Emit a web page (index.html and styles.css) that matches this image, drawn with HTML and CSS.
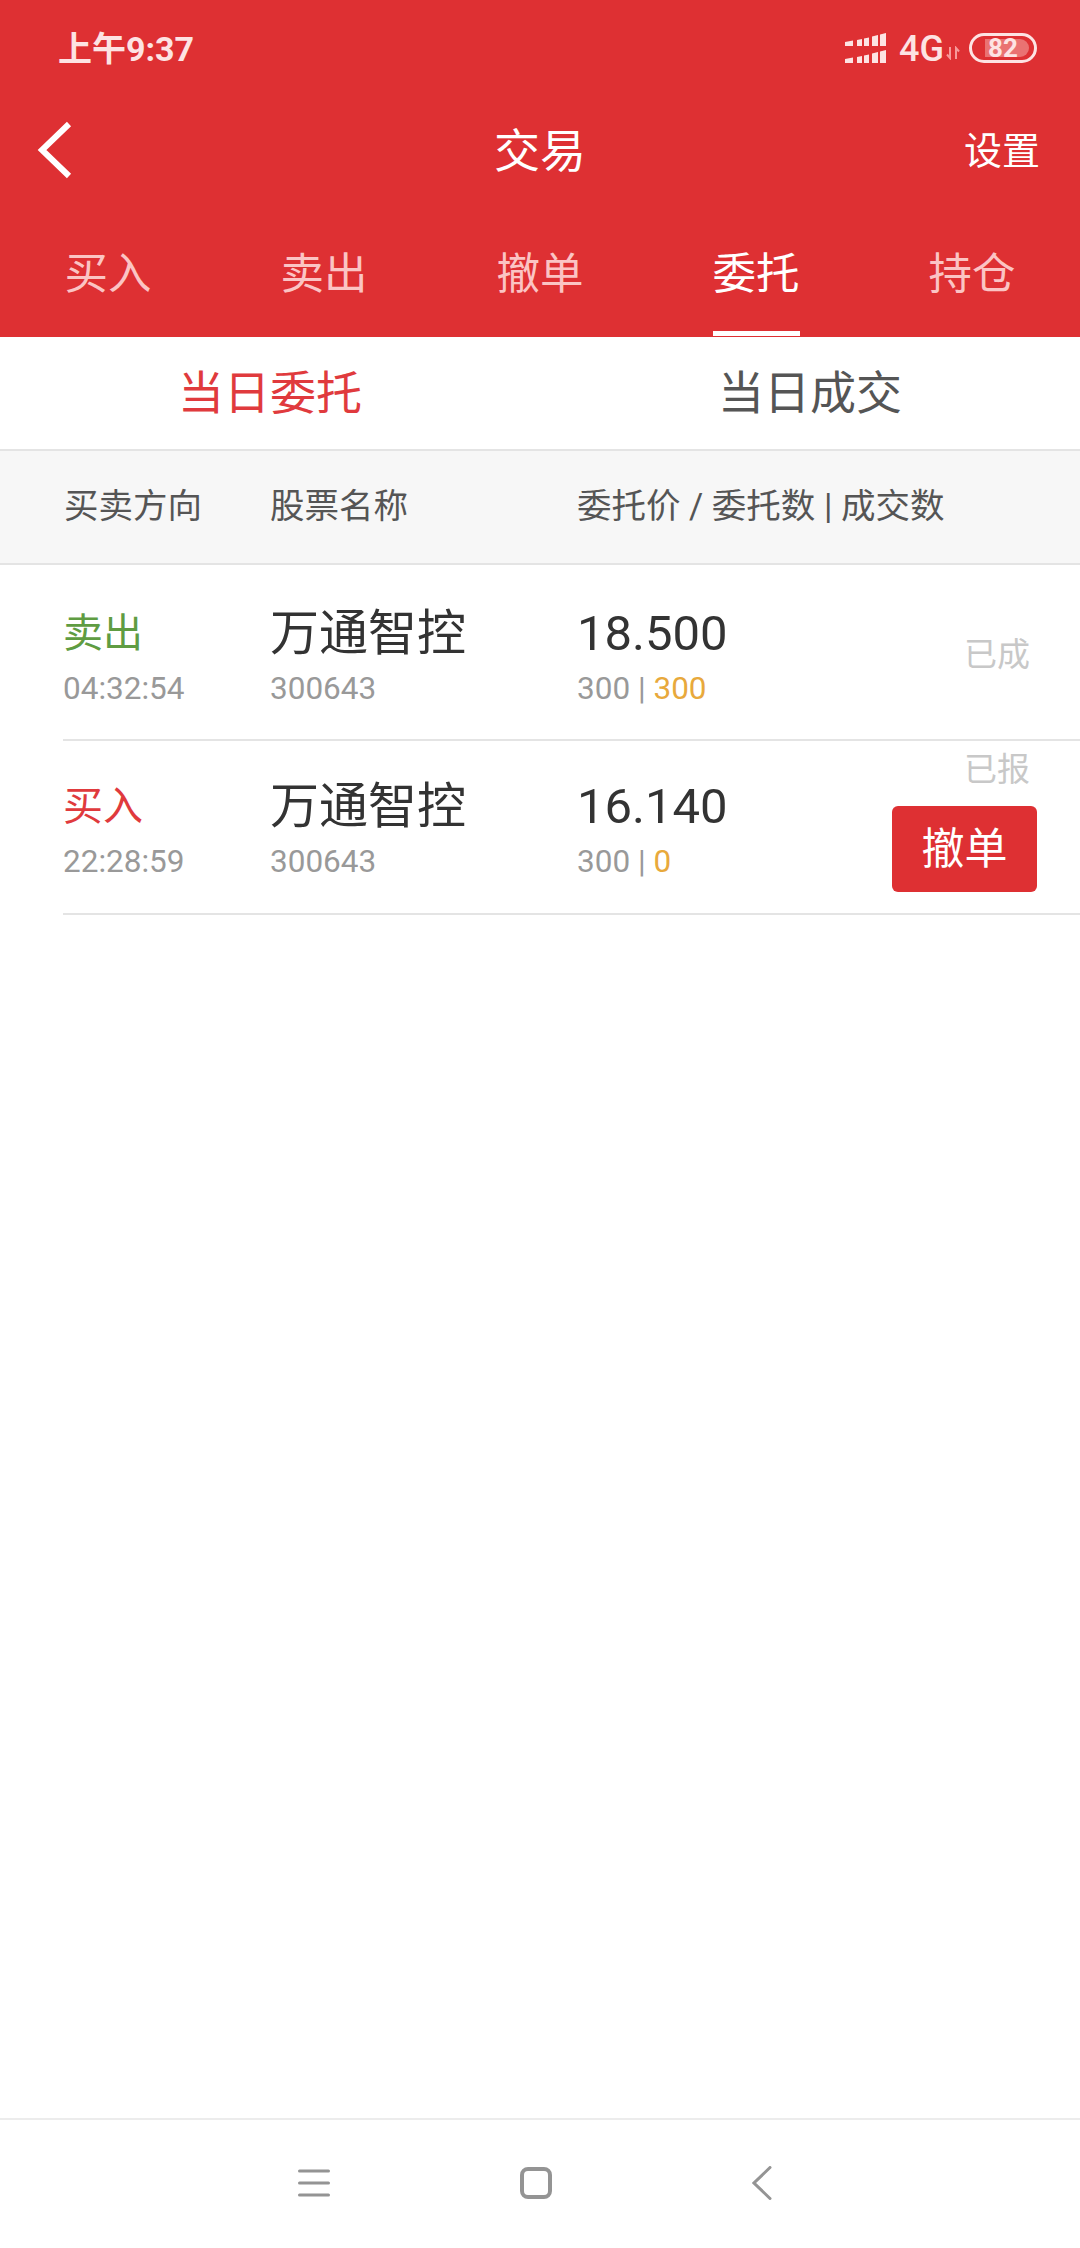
FILE: index.html
```html
<!DOCTYPE html>
<html lang="zh-CN">
<head>
<meta charset="utf-8">
<title>交易</title>
<link rel="stylesheet" href="styles.css">
</head>
<body>
<div class="app">
  <header class="top">
    <div class="status">
      <span class="time">上午9:37</span>
      <div class="status-right">
        <svg class="signal" width="41" height="31" viewBox="0 0 41 31"><g fill="#fde3e3"><path d="M0 10l8-1.500V14H0zM12 8l5-1v7h-5zM19 6.500l5-1V14h-5zM27 4.500l6-1.500v11h-6zM35 2.500l6-1.500v13h-6z"/><path d="M0 27l8-1.500V31H0zM12 25l5-1v7h-5zM19 23.500l5-1V31h-5zM27 21.500l6-1.500v11h-6zM35 19.500l6-1.500v13h-6z"/></g></svg>
        <span class="net">4G</span>
        <svg class="arrows" width="14" height="14" viewBox="0 0 14 14"><path d="M4 1v11L1 8.500M10 13V2l3 3.500" fill="none" stroke="#f79a9a" stroke-width="2"/></svg>
        <div class="battery"><span class="level"></span><span class="pct">82</span></div>
      </div>
    </div>
    <div class="nav">
      <svg class="back" width="36" height="58" viewBox="0 0 36 58"><path d="M32 3 5 29l27 26" fill="none" stroke="#fff" stroke-width="6"/></svg>
      <h1 class="title">交易</h1>
      <span class="settings">设置</span>
    </div>
    <nav class="tabs">
      <span class="tab">买入</span>
      <span class="tab">卖出</span>
      <span class="tab">撤单</span>
      <span class="tab active">委托</span>
      <span class="tab">持仓</span>
    </nav>
  </header>
  <div class="subtabs">
    <span class="subtab on">当日委托</span>
    <span class="subtab">当日成交</span>
  </div>
  <div class="thead">
    <span>买卖方向</span>
    <span>股票名称</span>
    <span>委托价 / 委托数 | 成交数</span>
  </div>
  <main class="list">
    <div class="row">
      <div class="cell"><span class="dir sell">卖出</span><span class="sub">04:32:54</span></div>
      <div class="cell"><span class="name">万通智控</span><span class="sub">300643</span></div>
      <div class="cell"><span class="price">18.500</span><span class="sub">300 | <em class="done">300</em></span></div>
      <div class="state"><span class="state-text">已成</span></div>
    </div>
    <div class="row">
      <div class="cell"><span class="dir buy">买入</span><span class="sub">22:28:59</span></div>
      <div class="cell"><span class="name">万通智控</span><span class="sub">300643</span></div>
      <div class="cell"><span class="price">16.140</span><span class="sub">300 | <em class="done">0</em></span></div>
      <div class="state"><span class="state-text">已报</span><span class="cancel">撤单</span></div>
    </div>
  </main>
  <footer class="sysnav">
    <svg width="32" height="30" viewBox="0 0 32 30"><path d="M1.500 3h29M1.500 15h29M1.500 27h29" stroke="#949494" stroke-width="3" stroke-linecap="round"/></svg>
    <svg width="32" height="32" viewBox="0 0 32 32"><rect x="2" y="2" width="28" height="28" rx="6" fill="none" stroke="#949494" stroke-width="4"/></svg>
    <svg width="20" height="34" viewBox="0 0 20 34"><path d="M18 1.500 2 17l16 15.500" fill="none" stroke="#949494" stroke-width="3" stroke-linecap="round"/></svg>
  </footer>
</div>
</body>
</html>
```

FILE: styles.css
```css
* { box-sizing: border-box; margin: 0; padding: 0; }
html, body { width: 1080px; height: 2248px; background: #fff; }
body { font-family: "Roboto", "Noto Sans CJK SC", sans-serif; overflow: hidden; }
.app { display: flex; flex-direction: column; width: 1080px; height: 2248px; }

.top { background: #de3033; height: 337px; color: #fff; display: flex; flex-direction: column; flex: none; }
.status { height: 96px; padding: 2px 43px 0 58px; display: flex; justify-content: space-between; align-items: center; }
.time { font-size: 34px; font-weight: 700; color: #fde3e3; line-height: 1; }
.status-right { display: flex; align-items: center; }
.signal { margin-right: 13px; margin-bottom: 3px; }
.net { font-size: 36px; font-weight: 500; color: #fde3e3; line-height: 1; }
.arrows { margin: 8px 0 0 2px; align-self: center; }
.battery { margin-left: 9px; width: 68px; height: 30px; margin-bottom: 3px; border: 3px solid #fde3e3; border-radius: 15px; position: relative; display: flex; align-items: center; justify-content: center; }
.level { position: absolute; left: 13px; top: 3px; bottom: 3px; right: 5px; background: #ea7272; border-radius: 0 9px 9px 0; }
.pct { position: relative; font-size: 26px; font-weight: 700; color: #fde3e3; line-height: 1; }

.nav { height: 110px; padding: 0 40px 0 37px; display: flex; align-items: center; justify-content: space-between; position: relative; }
.back { flex: none; margin-bottom: 3px; }
.title { position: absolute; left: 0; right: 0; text-align: center; font-size: 46px; font-weight: 400; line-height: 1; }
.settings { font-size: 38px; line-height: 1; }

.tabs { flex: 1; display: grid; grid-template-columns: repeat(5, 1fr); }
.tab { font-size: 43.500px; line-height: 1; color: #fbc4c4; justify-self: center; padding-top: 47px; }
.tab.active { color: #fff; border-bottom: 5px solid #fff; margin-bottom: 1px; }

.subtabs { height: 112px; display: grid; grid-template-columns: 1fr 1fr; align-items: center; text-align: center; flex: none; }
.subtab { font-size: 46px; line-height: 1; color: #555; }
.subtab.on { color: #e03a3d; }

.thead { height: 116px; flex: none; background: #f7f7f7; border-top: 2px solid #e4e4e4; border-bottom: 2px solid #e4e4e4; display: grid; grid-template-columns: 206px 307px 1fr; padding: 0 0 8px 64px; align-items: center; font-size: 34.500px; color: #555; }

.list { flex: 1; padding-top: 2px; }
.row { height: 174px; margin-left: 63px; border-bottom: 2px solid #e4e4e4; display: grid; grid-template-columns: 207px 307px 1fr 200px; }
.cell { display: flex; flex-direction: column; padding-top: 40px; }
.row + .row .cell { padding-top: 39px; }
.dir { font-size: 40px; line-height: 54px; height: 54px; }
.sell { color: #5f9c42; }
.buy { color: #e03a3d; }
.name { font-size: 49px; line-height: 54px; height: 54px; color: #333; }
.price { font-size: 49px; line-height: 54px; height: 54px; color: #333; }
.sub { margin-top: 4px; font-size: 31.500px; line-height: 48px; color: #999; }
.done { font-style: normal; color: #e8a93c; }

.state { display: flex; flex-direction: column; align-items: flex-end; }
.state-text { font-size: 33px; line-height: 40px; color: #c8c8c8; margin: 68px 50px 0 0; }
.row + .row .state-text { margin-top: 9px; }
.cancel { margin: 16px 43px 0 0; width: 145px; height: 86px; background: #de3033; color: #fff; border-radius: 6px; font-size: 43px; display: flex; align-items: center; justify-content: center; line-height: 1; }

.sysnav { height: 130px; flex: none; border-top: 2px solid #ececec; display: flex; align-items: center; padding: 0 0 2px 298px; }
.sysnav svg:nth-child(2) { margin-left: 190px; }
.sysnav svg:nth-child(3) { margin-left: 200px; }
```
